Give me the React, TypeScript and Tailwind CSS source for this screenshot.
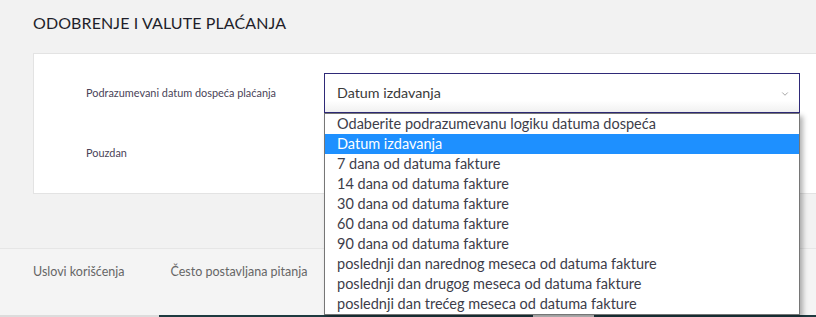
import { ChevronDown } from "lucide-react";

const options = [
  "Odaberite podrazumevanu logiku datuma dospeća",
  "Datum izdavanja",
  "7 dana od datuma fakture",
  "14 dana od datuma fakture",
  "30 dana od datuma fakture",
  "60 dana od datuma fakture",
  "90 dana od datuma fakture",
  "poslednji dan narednog meseca od datuma fakture",
  "poslednji dan drugog meseca od datuma fakture",
  "poslednji dan trećeg meseca od datuma fakture",
];

const App = () => {
  const selected = "Datum izdavanja";

  return (
    <div className="relative w-[816px] h-[317px] overflow-hidden bg-[#f2f2f2] font-['Lato','Liberation_Sans',sans-serif]">
      {/* Page content */}
      <div className="pl-[33px]">
        <h2 className="pt-[12px] h-[53px] text-[16px] leading-[22px] text-[#1f1f2b] tracking-[0.1px]">
          ODOBRENJE I VALUTE PLAĆANJA
        </h2>

        <div className="w-[800px] h-[141px] bg-white border border-[#e3e3e3] pl-[52px] pt-[19px]">
          <div className="flex items-center h-[40px]">
            <span className="w-[238px] text-[10.9px] text-[#4a4458]">
              Podrazumevani datum dospeća plaćanja
            </span>
            <div className="relative flex items-center w-[476px] h-[40px] border border-[#2f2a78] bg-gradient-to-b from-white from-70% to-[#f1f1f1] pl-[12px] text-[14.3px] text-[#3a3a3a]">
              {selected}
              <ChevronDown
                className="absolute right-[9px] top-[15px] text-[#888]"
                size={10}
                strokeWidth={1.8}
              />
            </div>
          </div>
          <div className="flex items-center h-[45px] mt-[18px] text-[10.9px] text-[#4a4458]">
            Pouzdan
          </div>
        </div>
      </div>

      {/* Footer */}
      <div className="absolute left-0 right-0 top-[248px] bottom-0 border-t border-[#e6e6e6] bg-[#f4f4f4]">
        <div className="flex items-center gap-[46px] h-[46px] pl-[33px] text-[12.5px] text-[#666] pt-[1px]">
          <span>Uslovi korišćenja</span>
          <span>Često postavljana pitanja</span>
        </div>
      </div>

      {/* Bottom bar */}
      <div className="absolute left-0 right-0 bottom-0 h-[2px] flex">
        <div className="w-[159px] bg-[#dcdcdc]" />
        <div className="w-[374px] bg-[#1e3a40]" />
        <div className="w-[61px] bg-[#d6d6d6]" />
        <div className="flex-1 bg-[#1e3a40]" />
      </div>

      {/* Open select list */}
      <ul className="absolute left-[324px] top-[113px] w-[476px] h-[202px] overflow-hidden bg-white border border-[#767676] shadow-[3px_3px_5px_rgba(0,0,0,0.3)] text-[14.5px] text-[#3d3d4a]">
        {options.map((opt) => (
          <li
            key={opt}
            className={`h-[20px] leading-[20px] pl-[12px] whitespace-nowrap ${
              opt === selected ? "bg-[#1e90ff] text-white" : ""
            }`}
          >
            {opt}
          </li>
        ))}
      </ul>
    </div>
  );
};

export default App;
